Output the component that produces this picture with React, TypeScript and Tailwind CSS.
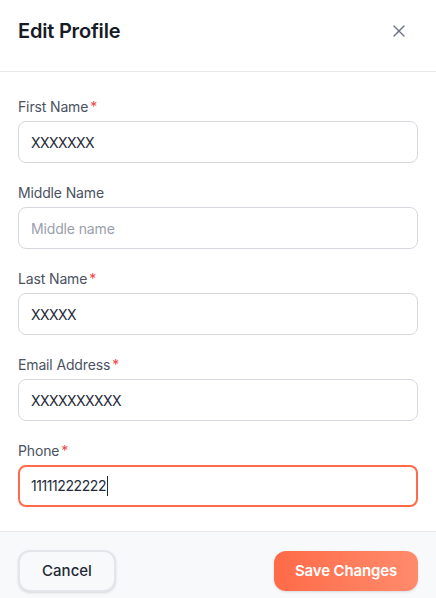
import React from 'react';
import { X } from 'lucide-react';

interface FieldProps {
  label: string;
  required?: boolean;
  value?: string;
  placeholder?: string;
  focused?: boolean;
}

function Field({ label, required, value, placeholder, focused }: FieldProps) {
  return (
    <div className="flex flex-col">
      <label className="text-sm leading-5 text-[#4b5262] tracking-[-0.01em]">
        {label}
        {required && <span className="ml-0.5 text-[#ef4444]">*</span>}
      </label>
      {focused ? (
        <div className="mt-1 flex h-[42px] items-center rounded-lg border-2 border-[#ff6b4a] px-[11px] text-sm tracking-[-0.03em] text-[#1f2937]">
          <span>{value}</span>
          <span className="ml-px h-5 w-px bg-[#1f2937]" />
        </div>
      ) : (
        <input
          readOnly
          value={value ?? ''}
          placeholder={placeholder}
          className="mt-1 h-[42px] rounded-lg border border-[#d5d8de] px-3 text-sm tracking-[-0.04em] text-[#1f2937] outline-none placeholder:tracking-[-0.01em] placeholder:text-[#9aa0ab]"
        />
      )}
    </div>
  );
}

export default function App() {
  return (
    <div className="min-h-screen bg-white font-['Inter','Noto_Sans',sans-serif]">
      {/* Header */}
      <div className="flex items-start justify-between border-b border-[#e5e7eb] px-[18px] pt-[17px] pb-[26px]">
        <h2 className="text-[20px] leading-7 font-semibold tracking-[-0.01em] text-[#161b26]">Edit Profile</h2>
        <button className="mt-1 mr-[9px] text-[#6b7280]">
          <X size={20} strokeWidth={1.6} />
        </button>
      </div>

      {/* Form */}
      <div className="flex flex-col gap-5 px-[18px] pt-[25px] pb-6">
        <Field label="First Name" required value="XXXXXXX" />
        <Field label="Middle Name" placeholder="Middle name" />
        <Field label="Last Name" required value="XXXXX" />
        <Field label="Email Address" required value="XXXXXXXXXX" />
        <Field label="Phone" required value="11111222222" focused />
      </div>

      {/* Footer */}
      <div className="flex items-center justify-between border-t border-[#e5e7eb] bg-[#f8f9fb] px-[18px] py-[18px]">
        <button className="h-[42px] w-[98px] rounded-xl border-2 border-[#e3e5ea] bg-[#f8f9fb] text-[15px] font-medium text-[#1f2937] shadow-sm">
          Cancel
        </button>
        <button className="h-10 w-[144px] rounded-xl bg-gradient-to-r from-[#ff6a48] to-[#ff8b6c] text-[15px] font-semibold tracking-[-0.01em] text-white shadow-sm">
          Save Changes
        </button>
      </div>
    </div>
  );
}
